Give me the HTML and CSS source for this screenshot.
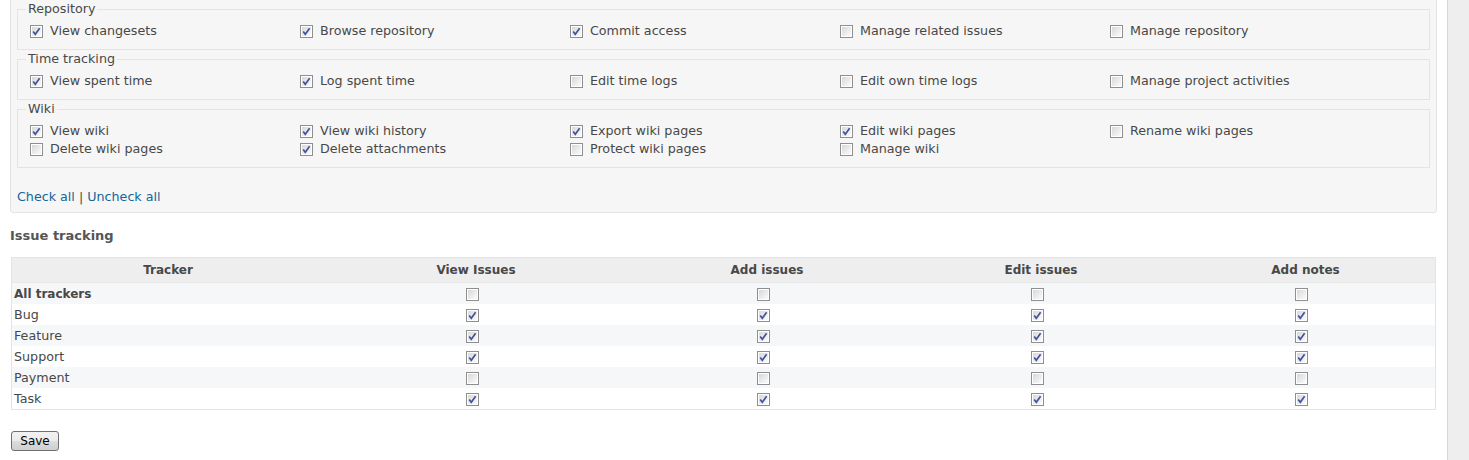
FILE: index.html
```html
<!DOCTYPE html>
<html>
<head>
<meta charset="utf-8">
<link rel="stylesheet" href="styles.css">
</head>
<body>
<svg width="0" height="0" class="defs">
  <defs>
    <linearGradient id="cbg" x1="0" y1="0" x2="1" y2="1">
      <stop offset="0" stop-color="#d8d8d8"/>
      <stop offset="1" stop-color="#fbfbfb"/>
    </linearGradient>
    <symbol id="off" viewBox="0 0 13 13">
      <rect x="0.5" y="0.5" width="12" height="12" fill="#fff" stroke="#8f8f8f"/>
      <rect x="2" y="2" width="9" height="9" fill="url(#cbg)"/>
    </symbol>
    <symbol id="on" viewBox="0 0 13 13">
      <rect x="0.5" y="0.5" width="12" height="12" fill="#fff" stroke="#8f8f8f"/>
      <rect x="2" y="2" width="9" height="9" fill="url(#cbg)"/>
      <path d="M3.2 6.4 L5.3 9.3 L9.6 3.2" fill="none" stroke="#41549c" stroke-width="1.7"/>
    </symbol>
  </defs>
</svg>
<div class="wrapper">
  <div class="main">
    <div class="box">
      <fieldset>
        <legend>Repository</legend>
        <div class="perms">
          <label class="perm"><svg class="cb"><use href="#on"/></svg>View changesets</label>
          <label class="perm"><svg class="cb"><use href="#on"/></svg>Browse repository</label>
          <label class="perm"><svg class="cb"><use href="#on"/></svg>Commit access</label>
          <label class="perm"><svg class="cb"><use href="#off"/></svg>Manage related issues</label>
          <label class="perm"><svg class="cb"><use href="#off"/></svg>Manage repository</label>
        </div>
      </fieldset>
      <fieldset>
        <legend>Time tracking</legend>
        <div class="perms">
          <label class="perm"><svg class="cb"><use href="#on"/></svg>View spent time</label>
          <label class="perm"><svg class="cb"><use href="#on"/></svg>Log spent time</label>
          <label class="perm"><svg class="cb"><use href="#off"/></svg>Edit time logs</label>
          <label class="perm"><svg class="cb"><use href="#off"/></svg>Edit own time logs</label>
          <label class="perm"><svg class="cb"><use href="#off"/></svg>Manage project activities</label>
        </div>
      </fieldset>
      <fieldset>
        <legend>Wiki</legend>
        <div class="perms">
          <label class="perm"><svg class="cb"><use href="#on"/></svg>View wiki</label>
          <label class="perm"><svg class="cb"><use href="#on"/></svg>View wiki history</label>
          <label class="perm"><svg class="cb"><use href="#on"/></svg>Export wiki pages</label>
          <label class="perm"><svg class="cb"><use href="#on"/></svg>Edit wiki pages</label>
          <label class="perm"><svg class="cb"><use href="#off"/></svg>Rename wiki pages</label>
          <label class="perm"><svg class="cb"><use href="#off"/></svg>Delete wiki pages</label>
          <label class="perm"><svg class="cb"><use href="#on"/></svg>Delete attachments</label>
          <label class="perm"><svg class="cb"><use href="#off"/></svg>Protect wiki pages</label>
          <label class="perm"><svg class="cb"><use href="#off"/></svg>Manage wiki</label>
        </div>
      </fieldset>
      <p class="checkall"><a href="#">Check all</a> | <a href="#">Uncheck all</a></p>
    </div>

    <h3 class="section">Issue tracking</h3>
    <table class="list">
      <thead>
        <tr>
          <th class="c-tracker">Tracker</th>
          <th class="c-view">View Issues</th>
          <th class="c-add">Add issues</th>
          <th class="c-edit">Edit issues</th>
          <th>Add notes</th>
        </tr>
      </thead>
      <tbody>
        <tr class="odd">
          <td class="name"><b>All trackers</b></td>
          <td><svg class="cb"><use href="#off"/></svg></td>
          <td><svg class="cb"><use href="#off"/></svg></td>
          <td><svg class="cb"><use href="#off"/></svg></td>
          <td><svg class="cb"><use href="#off"/></svg></td>
        </tr>
        <tr class="even">
          <td class="name">Bug</td>
          <td><svg class="cb"><use href="#on"/></svg></td>
          <td><svg class="cb"><use href="#on"/></svg></td>
          <td><svg class="cb"><use href="#on"/></svg></td>
          <td><svg class="cb"><use href="#on"/></svg></td>
        </tr>
        <tr class="odd">
          <td class="name">Feature</td>
          <td><svg class="cb"><use href="#on"/></svg></td>
          <td><svg class="cb"><use href="#on"/></svg></td>
          <td><svg class="cb"><use href="#on"/></svg></td>
          <td><svg class="cb"><use href="#on"/></svg></td>
        </tr>
        <tr class="even">
          <td class="name">Support</td>
          <td><svg class="cb"><use href="#on"/></svg></td>
          <td><svg class="cb"><use href="#on"/></svg></td>
          <td><svg class="cb"><use href="#on"/></svg></td>
          <td><svg class="cb"><use href="#on"/></svg></td>
        </tr>
        <tr class="odd">
          <td class="name">Payment</td>
          <td><svg class="cb"><use href="#off"/></svg></td>
          <td><svg class="cb"><use href="#off"/></svg></td>
          <td><svg class="cb"><use href="#off"/></svg></td>
          <td><svg class="cb"><use href="#off"/></svg></td>
        </tr>
        <tr class="even">
          <td class="name">Task</td>
          <td><svg class="cb"><use href="#on"/></svg></td>
          <td><svg class="cb"><use href="#on"/></svg></td>
          <td><svg class="cb"><use href="#on"/></svg></td>
          <td><svg class="cb"><use href="#on"/></svg></td>
        </tr>
      </tbody>
    </table>
    <button class="save" type="button">Save</button>
  </div>
  <div class="sidebar"></div>
</div>
</body>
</html>
```

FILE: styles.css
```css
html, body {
  margin: 0;
  padding: 0;
  background: #fff;
}
body {
  font-family: "DejaVu Sans", Verdana, sans-serif;
  font-size: 12.7px;
  color: #484848;
  overflow: hidden;
}
.defs {
  position: absolute;
  width: 0;
  height: 0;
}
.wrapper {
  display: flex;
  min-height: 460px;
}
.main {
  width: 1447px;
  flex: none;
}
.sidebar {
  flex: 1;
  background: #eeeeee;
  border-left: 1px solid #d7d7d7;
}
.box {
  margin: -7px 10px 0 10px;
  padding: 6px;
  background: #f6f6f6;
  border: 1px solid #e4e4e4;
  border-radius: 3px;
  line-height: 18px;
}
fieldset {
  margin: 0;
  padding: 4px 12px 9px 12px;
  border: 1px solid #e4e4e4;
  min-width: 0;
}
legend {
  padding: 0 2px;
  margin-left: -4px;
  line-height: 18px;
  color: #484848;
}
.perms {
  display: grid;
  grid-template-columns: repeat(5, 270px);
}
.perm {
  display: flex;
  align-items: center;
  white-space: nowrap;
  height: 18px;
}
.cb {
  width: 13px;
  height: 13px;
  flex: none;
  display: inline-block;
}
.perm .cb {
  margin-right: 7px;
  margin-top: 1px;
}
.checkall {
  margin: 20px 0 0 0;
  line-height: 18px;
}
.checkall a {
  color: #116699;
  text-decoration: none;
}
.section {
  margin: 13px 10px 11px 10px;
  font-size: 13px;
  line-height: 20px;
  color: #555555;
  font-weight: bold;
}
table.list {
  margin: 0 11px;
  width: 1425px;
  border-collapse: collapse;
  border: 1px solid #e4e4e4;
  table-layout: fixed;
}
table.list th {
  background: #eeeeee;
  height: 24px;
  padding: 0 3px;
  font-size: 12px;
  font-weight: bold;
  color: #484848;
  text-align: center;
  border-bottom: 1px solid #e8e8e8;
}
.c-tracker { width: 306px; }
.c-view { width: 298px; }
.c-add { width: 272px; }
.c-edit { width: 264px; }
table.list td {
  height: 21px;
  padding: 0 3px;
  text-align: center;
  vertical-align: middle;
}
table.list td.name {
  text-align: left;
  padding-left: 2px;
}
table.list td.name b {
  font-size: 12px;
}
table.list td .cb {
  vertical-align: middle;
  margin-right: 8px;
}
tr.odd td {
  background: #f6f7f8;
}
tr.even td {
  background: #ffffff;
}
.save {
  margin: 21px 0 0 11px;
  width: 48px;
  height: 20px;
  padding: 0;
  font-family: "DejaVu Sans", Verdana, sans-serif;
  font-size: 12px;
  color: #000;
  border: 1px solid #707070;
  border-radius: 3px;
  background: linear-gradient(#f2f2f2, #ebebeb 50%, #dddddd 51%, #cfcfcf);
}
```
